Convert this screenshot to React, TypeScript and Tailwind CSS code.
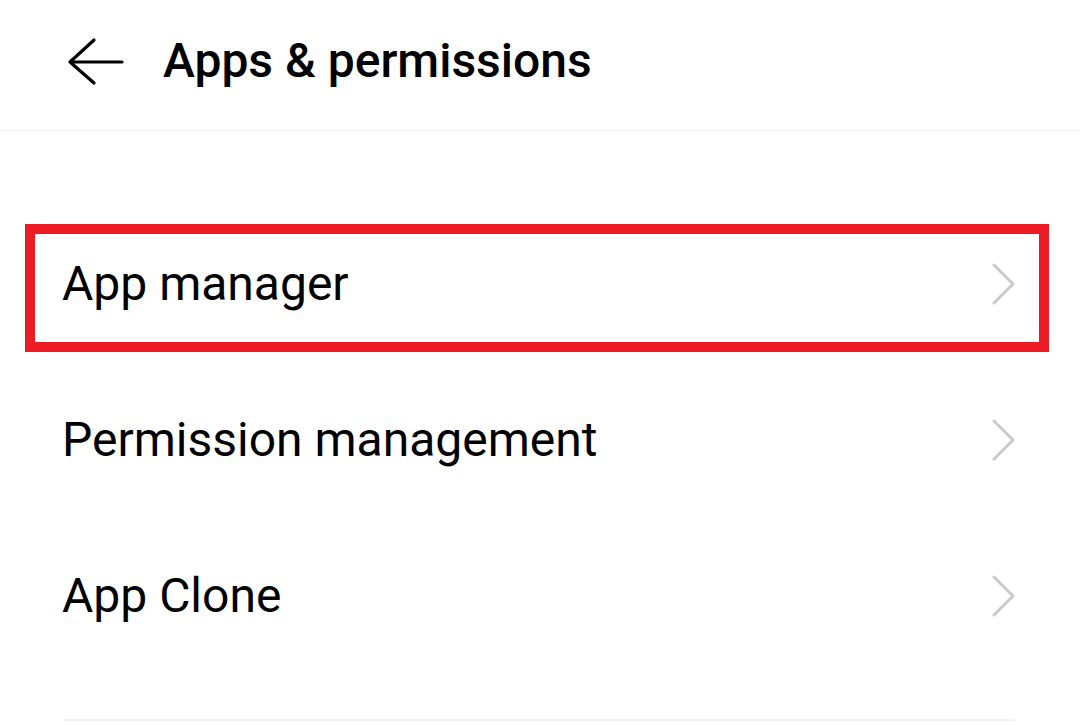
import React from "react";

const Chevron = () => (
  <svg width="24" height="42" viewBox="0 0 24 42" fill="none" className="shrink-0">
    <path d="M2 2 L21 21 L2 40" stroke="#cacaca" strokeWidth="3" strokeLinecap="round" strokeLinejoin="round" />
  </svg>
);

const Row = ({ label, highlighted }: { label: string; highlighted?: boolean }) => (
  <div className="relative h-[156px] flex items-center justify-between pl-[62px] pr-[64px]">
    <span className="text-[48px] leading-none text-black font-normal">{label}</span>
    <Chevron />
    {highlighted && (
      <div className="absolute left-[25px] right-[31px] top-[18px] h-[128px] border-[10px] border-[#ed1c24] pointer-events-none" />
    )}
  </div>
);

export default function App() {
  return (
    <div className="w-[1080px] h-[725px] bg-white overflow-hidden" style={{ fontFamily: "Roboto, 'Noto Sans', sans-serif" }}>
      <div className="h-[131px] flex items-center border-b border-[#f4f4f4]">
        <svg width="60" height="50" viewBox="0 0 60 50" fill="none" className="ml-[67px] -mt-[6px]">
          <path d="M3 25 L55 25 M27 3 L3 25 L27 46" stroke="#000" strokeWidth="3.2" strokeLinecap="round" strokeLinejoin="round" />
        </svg>
        <span className="ml-[36px] -mt-[8px] text-[48px] leading-none font-medium text-black">Apps &amp; permissions</span>
      </div>
      <div className="pt-[75px]">
        <Row label="App manager" highlighted />
        <Row label="Permission management" />
        <Row label="App Clone" />
      </div>
      <div className="mt-[45px] ml-[64px] w-[951px] h-[2px] bg-[#f2f2f2]" />
    </div>
  );
}
